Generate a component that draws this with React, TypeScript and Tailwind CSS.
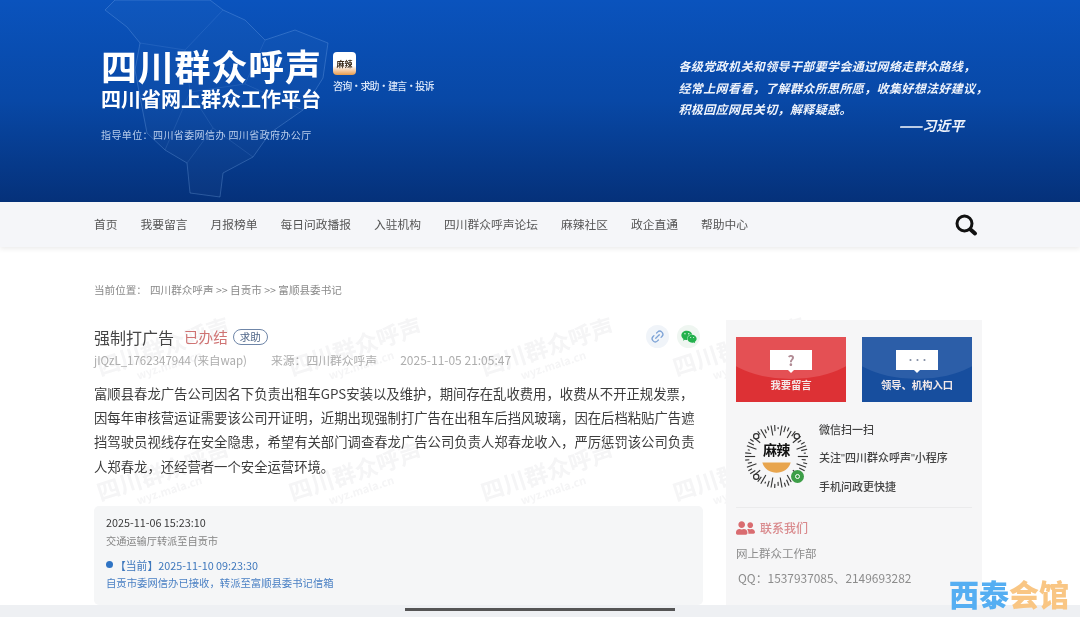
import React from 'react';
import { Link2 } from 'lucide-react';
import { FaWeixin, FaUserFriends } from 'react-icons/fa';

const cjk = 'font-["Noto_Sans_CJK_SC","Noto_Sans",sans-serif]';

const navItems = ['首页', '我要留言', '月报榜单', '每日问政播报', '入驻机构', '四川群众呼声论坛', '麻辣社区', '政企直通', '帮助中心'];

const bodyLines = [
  '富顺县春龙广告公司因名下负责出租车GPS安装以及维护，期间存在乱收费用，收费从不开正规发票，',
  '因每年审核营运证需要该公司开证明，近期出现强制打广告在出租车后挡风玻璃，因在后档粘贴广告遮',
  '挡驾驶员视线存在安全隐患，希望有关部门调查春龙广告公司负责人郑春龙收入，严厉惩罚该公司负责',
  '人郑春龙，还经营者一个安全运营环境。',
];

const quoteLines = [
  '各级党政机关和领导干部要学会通过网络走群众路线，',
  '经常上网看看，了解群众所思所愿，收集好想法好建议，',
  '积极回应网民关切，解释疑惑。',
];

const watermarkTiles = Array.from({ length: 8 }, (_, i) => i);

// 小程序码的放射状线条
const qrDashes = Array.from({ length: 54 }, (_, i) => {
  const angle = (i / 54) * Math.PI * 2;
  const inner = i % 3 === 0 ? 21 : i % 3 === 1 ? 25 : 27;
  const outer = i % 2 === 0 ? 31 : 28 + (i % 4);
  return {
    x1: 32 + Math.cos(angle) * inner,
    y1: 32 + Math.sin(angle) * inner,
    x2: 32 + Math.cos(angle) * outer,
    y2: 32 + Math.sin(angle) * outer,
  };
});

function SichuanMap() {
  return (
    <svg className="absolute left-[95px] top-0 h-[200px] w-[240px] blur-[0.6px]" viewBox="0 0 240 200" fill="none">
      <path
        d="M20 0L10 10L32 27L45 43L40 70L45 97L52 133L70 150L92 163L95 193L125 197L128 173L158 157L175 133L208 110L228 78L233 43L200 30L170 40L150 20L128 10L115 0Z"
        fill="#ffffff"
        fillOpacity="0.025"
        stroke="#8ab8f2"
        strokeOpacity="0.28"
      />
      <path
        d="M45 43L90 50L128 10M90 50L95 92L150 84L170 40M150 84L208 110M95 92L70 150M95 92L118 128L158 157M118 128L92 163"
        stroke="#8ab8f2"
        strokeOpacity="0.14"
      />
    </svg>
  );
}

function Hero() {
  return (
    <header className="relative flex h-[202px] justify-between overflow-hidden bg-gradient-to-b from-[#0a53bd] via-[#0848a6] to-[#05317a] pl-[101px] pr-[92px] text-white">
      <SichuanMap />
      <div className="relative pt-[45px]">
        <div className="flex items-start">
          <div className="w-[232px]">
            <div className="whitespace-nowrap text-[36px] font-bold leading-[40px] tracking-[0.8px]">四川群众呼声</div>
            <div className="mt-[2px] whitespace-nowrap text-[20px] font-bold leading-[24px]">四川省网上群众工作平台</div>
          </div>
          <div className="pt-[7px]">
            <div className="flex h-[23px] w-[23px] flex-col items-center justify-center rounded-[4px] bg-gradient-to-b from-white from-60% to-[#e79a45] text-[8px] font-bold leading-none text-[#3a2a1a]">
              麻辣
            </div>
            <div className="mt-[4px] whitespace-nowrap text-[10px] font-medium leading-[14px] tracking-[-0.85px] text-[#dce8fa]">咨询·求助·建言·投诉</div>
          </div>
        </div>
        <div className="mt-[17px] whitespace-nowrap text-[10px] leading-[14px] tracking-[0.4px] text-[#b9cdec]">指导单位：四川省委网信办 四川省政府办公厅</div>
      </div>
      <div className="relative pt-[55px] text-[12px] font-bold italic leading-[21.5px] tracking-[0.38px] text-[#eef3fb]">
        {quoteLines.map((line) => (
          <div key={line} className="whitespace-nowrap">{line}</div>
        ))}
        <div className="-mt-[4px] pl-[220px] text-[14px] leading-[18px] tracking-normal">——习近平</div>
      </div>
    </header>
  );
}

function NavBar() {
  return (
    <nav className="relative z-10 flex h-[45px] items-center justify-between bg-[#f5f6f9] pl-[94px] pr-[102px] shadow-[0_2px_5px_rgba(0,0,0,0.08)]">
      <ul className="flex gap-[23px] pb-[2px] text-[11.75px] text-[#555]">
        {navItems.map((item) => (
          <li key={item}>{item}</li>
        ))}
      </ul>
      <svg className="h-6 w-6" viewBox="0 0 24 24" fill="none">
        <circle cx="10.5" cy="10.5" r="7.5" stroke="#111" strokeWidth="3" />
        <path d="M16.5 16.5L21 20.5" stroke="#111" strokeWidth="4" strokeLinecap="round" />
      </svg>
    </nav>
  );
}

function Watermark() {
  return (
    <div className="pointer-events-none absolute left-[69px] top-[332px] grid w-[768px] grid-cols-4 gap-y-[85px]">
      {watermarkTiles.map((i) => (
        <div key={i} className="h-[40px] w-[192px] -rotate-[18deg] text-center">
          <div className="whitespace-nowrap text-[23px] font-bold leading-[26px] text-[#f5f5f6]">四川群众呼声</div>
          <div className="text-[11px] font-bold leading-[14px] text-[#f5f5f6]">wyz.mala.cn</div>
        </div>
      ))}
    </div>
  );
}

function Article() {
  return (
    <section className="w-[609px]">
      <div className="flex items-center justify-between pr-[3px]">
        <div className="flex items-center">
          <h1 className="text-[16px] leading-[22px] text-[#454545]">强制打广告</h1>
          <span className="ml-[10px] text-[14.6px] leading-[22px] text-[#cf7373]">已办结</span>
          <span className="ml-[5px] flex h-[16px] w-[35px] items-center justify-center rounded-full border border-[#6f86a8] text-[10.5px] text-[#4d6486]">求助</span>
        </div>
        <div className="flex items-center gap-[8px]">
          <span className="flex h-[23px] w-[23px] items-center justify-center rounded-full bg-[#f0f4f9]">
            <Link2 className="h-[15px] w-[15px] -rotate-45 text-[#7da3d6]" />
          </span>
          <span className="flex h-[23px] w-[23px] items-center justify-center rounded-full bg-[#eff6f1]">
            <FaWeixin className="h-[16px] w-[16px] text-[#23b14d]" />
          </span>
        </div>
      </div>
      <div className="mt-[4px] flex whitespace-nowrap text-[11.5px] leading-[16px] text-[#adadad]">
        <span>jIQzL_1762347944 (来自wap)</span>
        <span className="ml-[24px] text-[11.8px]">来源：四川群众呼声</span>
        <span className="ml-[23px] text-[12px]">2025-11-05 21:05:47</span>
      </div>
      <div className="mt-[14px] text-[13.35px] leading-[24.2px] text-[#3d3d3d]">
        {bodyLines.map((line) => (
          <p key={line} className="whitespace-nowrap">{line}</p>
        ))}
      </div>
      <div className="mt-[27px] h-[99px] rounded-[5px] bg-[#f5f6f7] pl-[12px] pt-[8px]">
        <div className="text-[10.8px] leading-[16px] text-[#3a3a3a]">2025-11-06 15:23:10</div>
        <div className="mt-[3px] text-[10.2px] leading-[16px] text-[#858585]">交通运输厅转派至自贡市</div>
        <div className="mt-[8px] flex items-center text-[10.8px] leading-[16px] text-[#3f78bd]">
          <span className="h-[7px] w-[7px] rounded-full bg-[#2f74c4]" />
          <span className="ml-[2px]">【当前】2025-11-10 09:23:30</span>
        </div>
        <div className="mt-[2px] text-[10.35px] leading-[16px] text-[#4a80c4]">自贡市委网信办已接收，转派至富顺县委书记信箱</div>
      </div>
    </section>
  );
}

function EntryButton({ label, mark, color, glow, markStyle }: { label: string; mark: string; color: string; glow: string; markStyle: string }) {
  return (
    <div className={`relative flex h-[65px] w-[110px] flex-col items-center overflow-hidden ${color}`}>
      <div className={`absolute -left-[20px] -top-[38px] h-[80px] w-[150px] rounded-[50%] ${glow}`} />
      <div className={`relative mt-[13px] flex h-[20px] w-[42px] items-center justify-center bg-white font-bold leading-none ${markStyle}`}>
        {mark}
        <span className="absolute -bottom-[3px] left-[18px] h-0 w-0 border-x-[3px] border-t-[3px] border-x-transparent border-t-white" />
      </div>
      <div className="relative mt-[8px] whitespace-nowrap text-[10.3px] font-bold leading-[14px] text-[#f3e9e9]">{label}</div>
    </div>
  );
}

function MiniCode() {
  return (
    <div className="relative h-[65px] w-[65px] shrink-0">
      <svg className="absolute inset-0 h-full w-full" viewBox="0 0 64 64" fill="none">
        {qrDashes.map((d, i) => (
          <line key={i} x1={d.x1} y1={d.y1} x2={d.x2} y2={d.y2} stroke="#333" strokeWidth="1.1" />
        ))}
        <circle cx="12" cy="12" r="2.6" stroke="#333" strokeWidth="1.2" fill="#f6f6f7" />
        <circle cx="52" cy="12" r="2.6" stroke="#333" strokeWidth="1.2" fill="#f6f6f7" />
        <circle cx="12" cy="52" r="2.6" stroke="#333" strokeWidth="1.2" fill="#f6f6f7" />
        <circle cx="32" cy="32" r="20" fill="#f6f6f7" />
        <path d="M18 38H46C44 45 38 48 32 48C26 48 20 45 18 38Z" fill="#e8a54e" />
      </svg>
      <div className="absolute left-[19px] top-[17px] text-[14px] font-bold leading-[16px] tracking-[-0.8px] text-[#111]">麻辣</div>
      <div className="absolute bottom-[6px] right-[5px] flex h-[13px] w-[13px] items-center justify-center rounded-full bg-[#3d9e48]">
        <span className="h-[5px] w-[5px] rounded-full border border-white" />
      </div>
    </div>
  );
}

function Sidebar() {
  return (
    <aside className="h-[285px] w-[256px] bg-[#f6f6f7] px-[10px] pt-[17px]">
      <div className="flex justify-between">
        <EntryButton label="我要留言" mark="?" color="bg-[#dd3135]" glow="bg-[#e45054]" markStyle="text-[14px] text-[#b08a94]" />
        <EntryButton label="领导、机构入口" mark="···" color="bg-[#174e9e]" glow="bg-[#2c5ea8]" markStyle="text-[8px] tracking-[-1px] text-[#8a94a8]" />
      </div>
      <div className="mt-[22px] flex pl-[8px]">
        <MiniCode />
        <div className="-mt-[4px] ml-[10px] space-y-[10px] text-[11px] font-medium leading-[18px] text-[#444]">
          <div>微信扫一扫</div>
          <div className="whitespace-nowrap">
            关注<span className="font-['Liberation_Sans']">"</span>四川群众呼声<span className="font-['Liberation_Sans']">"</span>小程序
          </div>
          <div>手机问政更快捷</div>
        </div>
      </div>
      <div className="mt-[12px] border-t border-[#ebebec]" />
      <div className="mt-[11px] flex items-center text-[12px] font-medium leading-[18px] text-[#d98a8d]">
        <FaUserFriends className="h-[18px] w-[19px] text-[#d96c70]" />
        <span className="ml-[5px]">联系我们</span>
      </div>
      <div className="mt-[7px] text-[11.5px] leading-[18px] text-[#8c8c8c]">网上群众工作部</div>
      <div className="mt-[7px] pl-[2px] text-[11.9px] leading-[18px] text-[#8c8c8c]">QQ：1537937085、2149693282</div>
    </aside>
  );
}

export default function App() {
  return (
    <div className={`relative h-[617px] w-[1080px] overflow-hidden bg-white blur-[0.3px] ${cjk}`}>
      <Hero />
      <NavBar />
      <Watermark />
      <main className="relative pl-[94px]">
        <div className="pt-[36px] text-[10.6px] leading-[14px] text-[#8a8a8a]">
          当前位置：
          <span className="ml-[3px]">四川群众呼声 &gt;&gt; 自贡市 &gt;&gt; 富顺县委书记</span>
        </div>
        <div className="mt-[23px] flex gap-[23px]">
          <div className="pt-[5px]">
            <Article />
          </div>
          <Sidebar />
        </div>
      </main>
      <div className="absolute inset-x-0 bottom-0 h-[12px] bg-[#eef0f3]">
        <div className="ml-[405px] mt-[3px] h-[3px] w-[270px] bg-[#555]" />
      </div>
      <div className="absolute bottom-[8px] left-[949px] whitespace-nowrap text-[30px] font-black leading-[32px]">
        <span className="text-[#55aef2]">西泰</span>
        <span className="text-[#f9c684]">会馆</span>
      </div>
    </div>
  );
}
